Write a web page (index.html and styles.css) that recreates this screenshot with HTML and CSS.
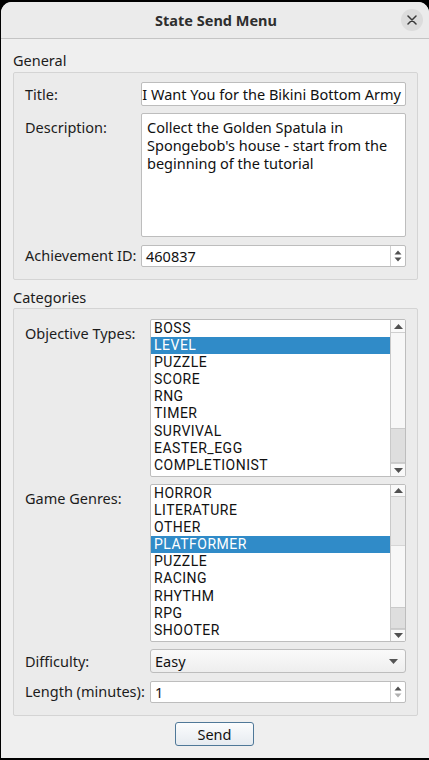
FILE: index.html
```html
<!DOCTYPE html>
<html>
<head>
<meta charset="utf-8">
<link rel="stylesheet" href="styles.css">
</head>
<body>
<div class="window">
  <div class="titlebar">
    <span class="title">State Send Menu</span>
    <span class="close"><svg width="10" height="10" viewBox="0 0 10 10"><path d="M1 1L9 9M9 1L1 9" stroke="#3a3a3a" stroke-width="1.5" stroke-linecap="round"/></svg></span>
  </div>
  <div class="content">
    <div class="section-title">General</div>
    <div class="group g1">
      <div class="label">Title:</div>
      <div class="input"><span>I Want You for the Bikini Bottom Army</span></div>
      <div class="label top">Description:</div>
      <div class="textarea">Collect the Golden Spatula in Spongebob's house - start from the beginning of the tutorial</div>
      <div class="label">Achievement ID:</div>
      <div class="spin"><span class="val">460837</span><span class="spinbtns"><svg width="8" height="14" viewBox="0 0 8 14"><path d="M0.5 5.5L4 1.5L7.5 5.5Z" fill="#505050"/><path d="M0.5 8.5L4 12.5L7.5 8.5Z" fill="#505050"/></svg></span></div>
    </div>
    <div class="section-title s2">Categories</div>
    <div class="group g2">
      <div class="label top">Objective Types:</div>
      <div class="list">
        <div class="items">
          <div class="item">BOSS</div>
          <div class="item sel">LEVEL</div>
          <div class="item">PUZZLE</div>
          <div class="item">SCORE</div>
          <div class="item">RNG</div>
          <div class="item">TIMER</div>
          <div class="item">SURVIVAL</div>
          <div class="item">EASTER_EGG</div>
          <div class="item">COMPLETIONIST</div>
        </div>
        <div class="scrollbar">
          <div class="sb-btn up"><svg width="9" height="5" viewBox="0 0 9 5"><path d="M0 5L4.5 0L9 5Z" fill="#505050"/></svg></div>
          <div class="sb-track">
            <div class="sb-space" style="height:95px"></div>
            <div class="sb-thumb" style="height:33px"></div>
          </div>
          <div class="sb-btn down"><svg width="9" height="5" viewBox="0 0 9 5"><path d="M0 0L4.5 5L9 0Z" fill="#505050"/></svg></div>
        </div>
      </div>
      <div class="label top">Game Genres:</div>
      <div class="list">
        <div class="items">
          <div class="item">HORROR</div>
          <div class="item">LITERATURE</div>
          <div class="item">OTHER</div>
          <div class="item sel">PLATFORMER</div>
          <div class="item">PUZZLE</div>
          <div class="item">RACING</div>
          <div class="item">RHYTHM</div>
          <div class="item">RPG</div>
          <div class="item">SHOOTER</div>
        </div>
        <div class="scrollbar">
          <div class="sb-btn up"><svg width="9" height="5" viewBox="0 0 9 5"><path d="M0 5L4.5 0L9 5Z" fill="#505050"/></svg></div>
          <div class="sb-track">
            <div class="sb-hover" style="height:48px"></div>
            <div class="sb-space" style="height:61px"></div>
            <div class="sb-thumb" style="height:20px"></div>
          </div>
          <div class="sb-btn down"><svg width="9" height="5" viewBox="0 0 9 5"><path d="M0 0L4.5 5L9 0Z" fill="#505050"/></svg></div>
        </div>
      </div>
      <div class="label">Difficulty:</div>
      <div class="combo"><span>Easy</span><svg width="9" height="5" viewBox="0 0 9 5"><path d="M0 0L4.5 5L9 0Z" fill="#555"/></svg></div>
      <div class="label">Length (minutes):</div>
      <div class="spin"><span class="val">1</span><span class="spinbtns"><svg width="8" height="14" viewBox="0 0 8 14"><path d="M0.5 5.5L4 1.5L7.5 5.5Z" fill="#505050"/><path d="M0.5 8.5L4 12.5L7.5 8.5Z" fill="#b0b0b0"/></svg></span></div>
    </div>
    <div class="actions"><button class="send">Send</button></div>
  </div>
</div>
</body>
</html>
```
FILE: styles.css
```css
html, body {
  margin: 0;
  padding: 0;
  background: #000;
}
body {
  width: 429px;
  height: 760px;
  overflow: hidden;
  font-family: "Noto Sans", "Open Sans", sans-serif;
  font-size: 14.5px;
  color: #1c1c1c;
}
.window {
  margin: 2px 0 0 1px;
  width: 428px;
  height: 756px;
  background: #efefef;
  border-radius: 11px 11px 0 0;
  overflow: hidden;
}
.titlebar {
  height: 36px;
  background: #ebebeb;
  border-bottom: 1px solid #c4c4c4;
  display: flex;
  align-items: center;
  justify-content: center;
  position: relative;
}
.title {
  font-weight: bold;
  font-size: 14.5px;
  color: #2e2e2e;
  padding-left: 2px;
}
.close {
  position: absolute;
  right: 6px;
  top: 7px;
  width: 22px;
  height: 22px;
  border-radius: 50%;
  background: #dcdcdc;
  display: flex;
  align-items: center;
  justify-content: center;
}
.content {
  display: flex;
  flex-direction: column;
  padding: 0 11px 0 12px;
}
.section-title {
  line-height: 18px;
  padding: 12px 0 3px 0;
  color: #1c1c1c;
}
.section-title.s2 {
  padding: 8px 0 2px 0;
}
.group {
  border: 1px solid #d4d4d4;
  border-radius: 2px;
  background: #ebebeb;
  display: grid;
  align-items: center;
  padding: 9px 11px 13px 11px;
}
.g1 {
  grid-template-columns: 116px 1fr;
  grid-template-rows: 24px 124px 22px;
  row-gap: 7px;
}
.g1 .spin { margin-top: 1px; }
.g2 {
  grid-template-columns: 125px 1fr;
  grid-template-rows: 158px 158px 24px 22px;
  row-gap: 7px;
  padding-top: 10px;
  padding-bottom: 13px;
}
.g2 .spin { margin-top: 1px; }
.label {
  line-height: 18px;
  white-space: nowrap;
  color: #1c1c1c;
}
.label.top {
  align-self: start;
  padding-top: 5px;
}
.input, .textarea, .spin, .list {
  background: #fff;
  border: 1px solid #bdbdbd;
  border-radius: 2px;
  box-sizing: border-box;
  height: 100%;
}
.input {
  display: flex;
  align-items: center;
  justify-content: flex-end;
  padding: 0 4px 0 2px;
  overflow: hidden;
  white-space: nowrap;
  color: #111;
}
.textarea {
  padding: 4px 5px;
  line-height: 18px;
  color: #111;
}
.spin {
  display: flex;
  align-items: center;
  justify-content: space-between;
  color: #111;
}
.spin .val { padding-left: 4px; }
.spinbtns {
  width: 14px;
  height: 100%;
  border-left: 1px solid #d0d0d0;
  display: flex;
  align-items: center;
  justify-content: center;
}
.list {
  display: flex;
  overflow: hidden;
}
.items {
  flex: 1;
  padding-top: 0px;
}
.item {
  height: 17.1px;
  line-height: 17px;
  padding-left: 3px;
  color: #111;
  white-space: nowrap;
  font-family: Roboto, "Noto Sans", sans-serif;
  font-size: 14px;
  letter-spacing: 0.5px;
}
.item.sel {
  background: #308bc8;
  color: #fff;
}
.scrollbar {
  width: 14px;
  border-left: 1px solid #c9c9c9;
  display: flex;
  flex-direction: column;
  background: #f7f7f7;
}
.sb-btn {
  height: 14px;
  display: flex;
  align-items: center;
  justify-content: center;
  background: #f9f9f9;
}
.sb-btn.up { border-bottom: 1px solid #cfcfcf; }
.sb-btn.down { border-top: 1px solid #cfcfcf; }
.sb-track {
  flex: 1;
  display: flex;
  flex-direction: column;
}
.sb-hover {
  background: #e9e9e9;
  border-bottom: 1px solid #d6d6d6;
}
.sb-thumb {
  background: #dedede;
  border-top: 1px solid #cacaca;
  border-bottom: 1px solid #cacaca;
}
.combo {
  height: 100%;
  box-sizing: border-box;
  border: 1px solid #bdbdbd;
  border-radius: 3px;
  background: linear-gradient(#fafafa, #eeeeee);
  display: flex;
  align-items: center;
  justify-content: space-between;
  padding: 0 7px 0 4px;
  color: #111;
}
.actions {
  display: flex;
  justify-content: center;
  padding-top: 6px;
  padding-right: 2px;
}
.send {
  width: 79px;
  height: 24px;
  font-family: inherit;
  font-size: 14.5px;
  color: #111;
  border: 1px solid #4f7898;
  border-radius: 3px;
  background: linear-gradient(#fbfcfd, #e6ebf0);
  padding: 0;
}
```
